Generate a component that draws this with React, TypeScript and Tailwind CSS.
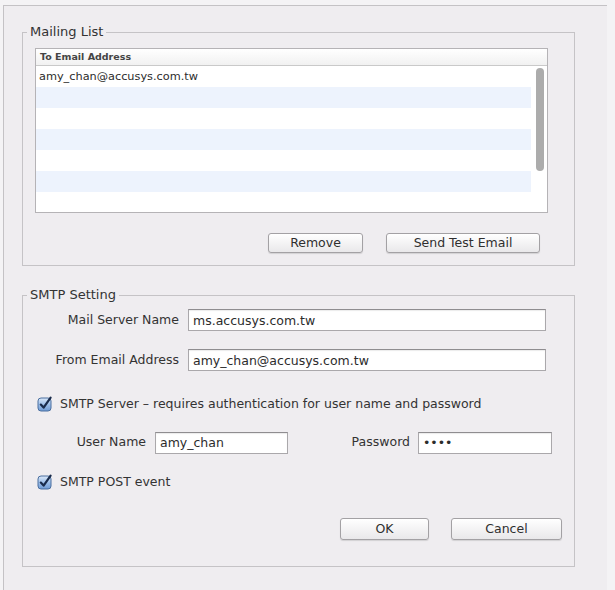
import React from "react";

const font = "font-['DejaVu_Sans',sans-serif]";

const Checkbox = () => (
  <svg width="16" height="16" viewBox="0 0 16 16" className="shrink-0">
    <defs>
      <linearGradient id="cbFill" x1="0" y1="0" x2="0" y2="1">
        <stop offset="0" stopColor="#dce9f9" />
        <stop offset="0.5" stopColor="#9dbfe9" />
        <stop offset="1" stopColor="#6f9ad4" />
      </linearGradient>
    </defs>
    <rect x="1" y="2" width="13" height="13" rx="3" fill="url(#cbFill)" stroke="#4a6f9f" strokeWidth="1" />
    <path d="M3.8 8.6 L6.6 11.6 L13.6 1.6" fill="none" stroke="#1a2c4c" strokeWidth="2.2" strokeLinecap="round" strokeLinejoin="round" />
  </svg>
);

const Button = ({ label, w, h }: { label: string; w: string; h: string }) => (
  <button
    type="button"
    className={`${w} ${h} rounded-[3px] border border-[#a3a1a4] bg-gradient-to-b from-white to-[#e9e8ea] text-[12.5px] leading-none text-[#2f2f2f] shadow-[0_1px_1px_rgba(0,0,0,0.12)]`}
  >
    {label}
  </button>
);

const Field = ({ value, w, type = "text" }: { value: string; w: string; type?: string }) => (
  <input
    type={type}
    readOnly
    value={value}
    className={`${w} h-[22px] border border-[#aaa8ab] border-t-[#8f8d90] bg-white pl-[4px] text-[12.5px] text-[#2c2c2c] shadow-[inset_0_1px_1px_rgba(0,0,0,0.08)] outline-none ${font}`}
  />
);

const rows = ["amy_chan@accusys.com.tw", "", "", "", "", "", ""];

export default function App() {
  return (
    <div className={`h-[590px] w-[615px] overflow-hidden bg-[#f4f3f5] pl-[3px] pt-[5px] text-[#333] ${font}`}>
      <div className="h-full w-[604px] border-l border-t border-[#c4c2c5] bg-[#efedf0] pl-[18px] pt-[18px]">
        {/* Mailing list group */}
        <fieldset className="w-[553px] border border-[#c5c3c6] pb-[12px] pl-[12px] pr-[26px] pt-[8px]">
          <legend className="-ml-[8px] px-[3px] text-[13px] leading-[16px] text-[#333]">Mailing List</legend>
          <div className="flex h-[165px] w-[513px] flex-col border border-[#b5b3b6] bg-white">
            <div className="h-[17px] shrink-0 border-b border-[#c9c9c9] bg-gradient-to-b from-white to-[#f1f1f1] pl-[4px] text-[9.5px] font-bold leading-[16px] text-[#444]">
              To Email Address
            </div>
            <div className="flex min-h-0 flex-1 overflow-hidden">
              <div className="flex-1">
                {rows.map((r, i) => (
                  <div
                    key={i}
                    className={`h-[21px] pl-[3px] text-[11.3px] leading-[21px] text-[#2c2c2c] ${i % 2 === 1 ? "bg-[#edf3fd]" : "bg-white"}`}
                  >
                    {r}
                  </div>
                ))}
              </div>
              <div className="w-[16px] pl-[5px] pt-[2px]">
                <div className="h-[103px] w-[8px] rounded-full bg-[#acacac]" />
              </div>
            </div>
          </div>
          <div className="mt-[20px] flex justify-end gap-[23px] pr-[8px]">
            <Button label="Remove" w="w-[95px]" h="h-[20px]" />
            <Button label="Send Test Email" w="w-[154px]" h="h-[20px]" />
          </div>
        </fieldset>

        {/* SMTP settings group */}
        <fieldset className="mt-[21px] w-[553px] border border-[#c5c3c6] pb-[26px] pr-[12px] pt-[6px]">
          <legend className="ml-[4px] px-[3px] text-[13px] leading-[16px] text-[#333]">SMTP Setting</legend>
          <div className="flex items-center gap-[9px]">
            <span className="w-[156px] text-right text-[12.5px]">Mail Server Name</span>
            <Field value="ms.accusys.com.tw" w="w-[358px]" />
          </div>
          <div className="mt-[18px] flex items-center gap-[9px]">
            <span className="w-[156px] text-right text-[12.5px]">From Email Address</span>
            <Field value="amy_chan@accusys.com.tw" w="w-[358px]" />
          </div>
          <label className="ml-[14px] mt-[24px] flex h-[18px] items-center gap-[7px] text-[12.5px]">
            <Checkbox />
            <span>SMTP Server – requires authentication for user name and password</span>
          </label>
          <div className="mt-[17px] flex items-center">
            <span className="w-[123px] text-right text-[12.5px]">User Name</span>
            <span className="ml-[9px]">
              <Field value="amy_chan" w="w-[133px]" />
            </span>
            <span className="w-[122px] text-right text-[12.5px]">Password</span>
            <span className="ml-[8px]">
              <Field value="abcd" type="password" w="w-[134px]" />
            </span>
          </div>
          <label className="ml-[14px] mt-[19px] flex h-[18px] items-center gap-[7px] text-[12.5px]">
            <Checkbox />
            <span>SMTP POST event</span>
          </label>
          <div className="mt-[27px] flex justify-end gap-[22px]">
            <Button label="OK" w="w-[89px]" h="h-[22px]" />
            <Button label="Cancel" w="w-[111px]" h="h-[22px]" />
          </div>
        </fieldset>
      </div>
    </div>
  );
}
